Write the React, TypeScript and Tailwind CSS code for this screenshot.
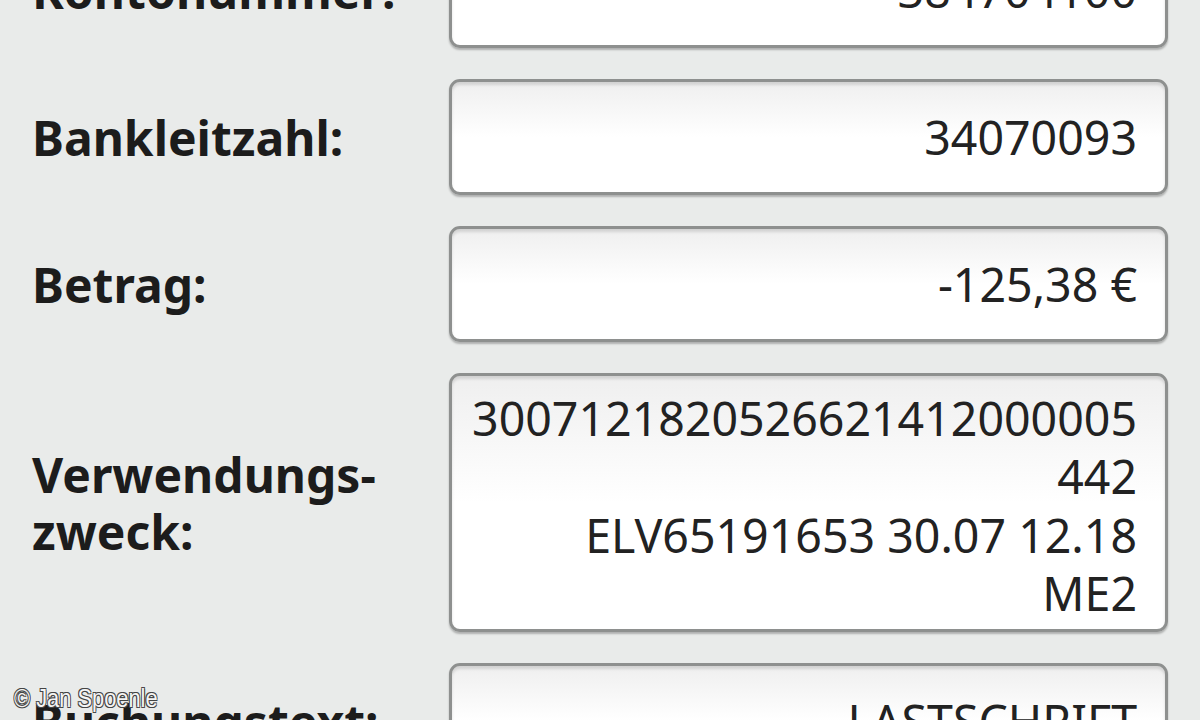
import React from "react";

const font = { fontFamily: '"Noto Sans", "Open Sans", sans-serif' };

function Field({ label, children, tall }: { label: React.ReactNode; children: React.ReactNode; tall?: boolean }) {
  return (
    <div className="flex items-center">
      <div className="w-[449px] shrink-0 pl-[32px] text-[48px] font-bold leading-[57px] text-[#1c1c1c]">{label}</div>
      <div
        className={`mr-[32px] flex flex-1 items-center justify-end rounded-[11px] border-[3px] border-[#8e908f] bg-gradient-to-b from-[#efefef] via-white to-white pr-[28px] text-right text-[46.5px] leading-[58.5px] text-[#222] shadow-[0_2px_2px_rgba(0,0,0,0.25),inset_0_3px_3px_rgba(0,0,0,0.12)] ${tall ? "h-[259px]" : "h-[116px]"}`}
      >
        <div>{children}</div>
      </div>
    </div>
  );
}

export default function App() {
  return (
    <div className="relative h-[720px] w-[1200px] overflow-hidden bg-[#e9ebea]" style={font}>
      <div className="mt-[-68px] flex flex-col gap-[31px]">
        <Field label="Kontonummer:">384704100</Field>
        <Field label="Bankleitzahl:">34070093</Field>
        <Field label="Betrag:">-125,38 €</Field>
        <Field
          tall
          label={
            <>
              Verwendungs-
              <br />
              zweck:
            </>
          }
        >
          <div className="mt-[6px]">
            3007121820526621412000005
            <br />
            442
            <br />
            ELV65191653 30.07 12.18
            <br />
            ME2
          </div>
        </Field>
        <Field label="Buchungstext:">LASTSCHRIFT</Field>
      </div>
      <div
        className="absolute left-[14px] top-[684px] z-10 text-[26px] leading-[28px] text-[#f4f4f4]"
        style={{
          fontFamily: '"Liberation Sans", Arial, sans-serif',
          textShadow:
            "1px 1px 0 #444, -1px -1px 0 #444, 1px -1px 0 #444, -1px 1px 0 #444",
          transform: "scaleX(0.84)",
          transformOrigin: "left",
        }}
      >
        © Jan Spoenle
      </div>
    </div>
  );
}
